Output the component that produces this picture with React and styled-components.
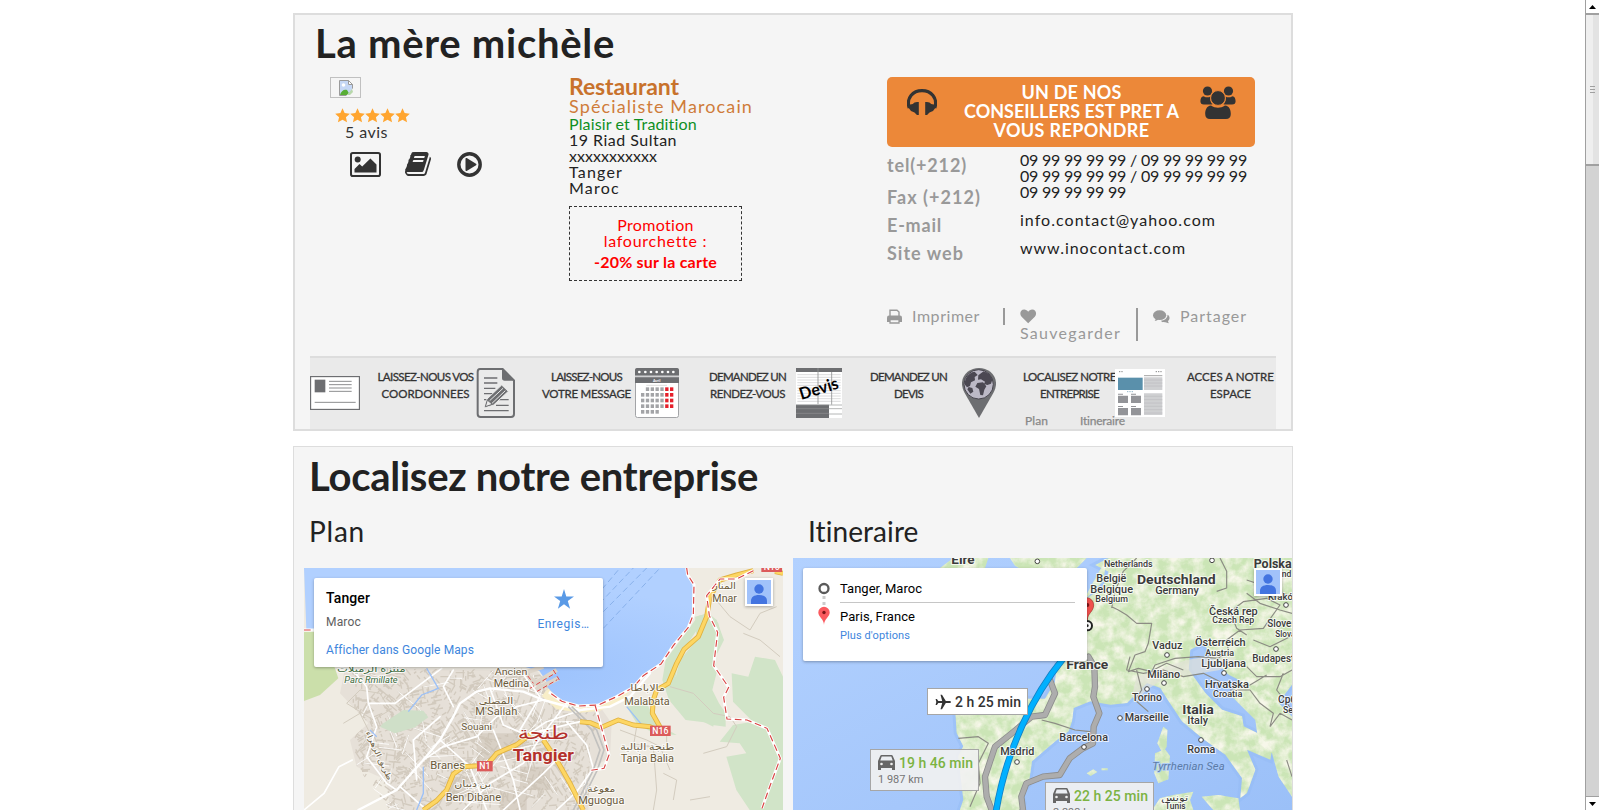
import React, { useLayoutEffect, useRef, useState } from 'react';
import styled, { createGlobalStyle, css } from 'styled-components';

const Global = createGlobalStyle`
  * { box-sizing: border-box; }
  html, body { margin: 0; height: 100%; overflow: hidden; background: #fff; }
  body { font-family: Lato, "Liberation Sans", sans-serif; font-size: 16px; line-height: 16px; color: #222; }
  h1, h2, h3, p, ul { margin: 0; padding: 0; }
  h3 { font-weight: 400; }
  svg { display: block; flex: none; }
`;

/* ---------- text tracked to a given measure ---------- */
const Tracked = styled.span`
  display: inline-block;
  white-space: pre;
`;
function Fit({ w, children }) {
  const ref = useRef(null);
  const [spacing, setSpacing] = useState(0);
  useLayoutEffect(() => {
    const natural = ref.current.getBoundingClientRect().width;
    setSpacing((w - natural) / children.length);
  }, [w, children]);
  return <Tracked ref={ref} style={{ letterSpacing: `${spacing}px` }}>{children}</Tracked>;
}

/* ---------- page frame ---------- */
const Window = styled.div`
  display: flex;
  height: 810px;
  overflow: hidden;
`;
const Page = styled.main`
  flex: 1;
  display: flex;
  flex-direction: column;
  gap: 15px;
  padding: 13px 0 0 293px;
`;
const Card = styled.section`
  width: 1000px;
  flex: none;
  background: #f5f5f5;
  border: ${p => p.$line}px solid #ddd;
  height: ${p => p.$h}px;
  display: flex;
  flex-direction: column;
`;
const Title = styled.h1`
  font-size: 40px;
  line-height: 44px;
  font-weight: 700;
  color: #222;
  padding: ${p => p.$pad};
`;

/* ---------- profile ---------- */
const Columns = styled.div`
  display: flex;
  height: 279px;
  padding-left: 35px;
`;
const Media = styled.div`
  width: 239px;
`;
const BrokenImage = styled.div`
  width: 31px;
  height: 21px;
  border: 1px solid #c0c0c0;
  padding: 2px 0 0 7px;
`;
const Stars = styled.div`
  display: flex;
  padding: 10px 0 0 5px;
`;
const Reviews = styled.div`
  padding: 1px 0 0 15px;
  color: #333;
`;
const MediaLinks = styled.div`
  display: flex;
  align-items: center;
  gap: 24px;
  padding: 10px 0 0 20px;
`;
const Details = styled.div`
  width: 318px;
  display: flex;
  flex-direction: column;
  align-items: flex-start;
  margin-top: -2px;
`;
const Category = styled.h2`
  font-size: 23px;
  line-height: 22px;
  font-weight: 700;
  color: #c8722c;
`;
const Speciality = styled.p`
  font-size: 18px;
  line-height: 19px;
  color: #cf7c3a;
`;
const Line = styled.p`
  color: ${p => p.$color || '#222'};
`;
const Promo = styled.div`
  width: 173px;
  height: 75px;
  margin-top: 10px;
  padding-top: 10px;
  border: 1px dashed #333;
  text-align: center;
  color: #f00;
  strong { display: block; line-height: 25px; }
`;
const Contact = styled.div`
  width: 368px;
`;
const Advisor = styled.div`
  display: flex;
  justify-content: space-between;
  height: 70px;
  padding: 6px 19px 0 20px;
  border-radius: 5px;
  background: #ec8839;
  color: #fff;
  font-weight: 700;
  font-size: 18px;
  line-height: 19px;
  text-align: center;
  div { margin-left: 6px; }
`;
const AdvisorIcon = styled.span`
  padding-top: ${p => p.$top}px;
`;
const Coordinates = styled.div`
  display: flex;
  height: 161px;
`;
const Labels = styled.div`
  width: 133px;
  font-size: 18px;
  font-weight: 700;
  color: #999;
  padding-top: 2px;
  p { line-height: 28px; }
  p:first-child { line-height: 32px; margin-bottom: 2px; }
`;
const Values = styled.div`
  padding-top: 5px;
  p + p { margin-top: 12px; }
`;
const Actions = styled.div`
  display: flex;
  color: #999;
  line-height: 16px;
`;
const Action = styled.div`
  width: 133px;
  flex: none;
  display: flex;
  flex-wrap: wrap;
  align-items: flex-start;
  align-content: flex-start;
  padding-left: ${p => (p.$rule ? 15 : 0)}px;
  ${p => p.$rule && css`border-left: 2px solid #999;`}
  height: ${p => p.$h}px;
  margin-left: ${p => p.$shift || 0}px;
  column-gap: 10px;
`;

/* ---------- service strip ---------- */
const Strip = styled.ul`
  display: flex;
  list-style: none;
  width: 966px;
  height: 73px;
  margin-left: 15px;
  padding-top: 10px;
  background: #eaeaea;
  border-top: 2px solid #ddd;
`;
const Service = styled.li`
  width: 161px;
  display: flex;
`;
const Picture = styled.div`
  width: 50px;
  height: 50px;
  display: flex;
  align-items: center;
  justify-content: center;
  flex: none;
  z-index: 1;
`;
const Caption = styled.div`
  width: 103px;
  margin-left: 14px;
  flex: none;
  text-align: center;
  font-size: 11.5px;
  line-height: 17px;
  -webkit-text-stroke: 0.3px #333;
  color: #333;
`;
const SubLinks = styled.div`
  display: flex;
  gap: 32px;
  padding: 10px 0 0 7px;
  font-size: 12px;
  color: #888;
  -webkit-text-stroke: 0.25px #888;
`;

/* ---------- maps ---------- */
const MapRow = styled.div`
  display: flex;
`;
const MapColumn = styled.div`
  width: ${p => p.$w}px;
  padding-left: ${p => p.$inset}px;
`;
const MapTitle = styled.h3`
  font-size: 28px;
  line-height: 34px;
  height: ${p => p.$h}px;
  padding: 1px 0 0 ${p => p.$inset}px;
`;
const MapFrame = styled.div`
  position: relative;
  width: ${p => p.$w}px;
  height: ${p => p.$h}px;
  overflow: hidden;
  font-family: Roboto, sans-serif;
`;
const InfoCard = styled.div`
  position: absolute;
  left: 10px;
  top: 10px;
  width: ${p => p.$w}px;
  height: ${p => p.$h}px;
  padding: 12px;
  display: flex;
  justify-content: space-between;
  background: #fff;
  border-radius: 2px;
  box-shadow: 0 1px 3px rgba(0, 0, 0, 0.3);
  font-size: 12px;
  color: #5e5e5e;
`;
const Place = styled.div`
  strong { display: block; font-size: 14px; font-weight: 500; color: #000; line-height: 16px; margin-bottom: 8px; }
`;
const BlueLink = styled.div`
  color: #4086dd;
  font-size: ${p => p.$size || 12}px;
  margin-top: ${p => p.$top || 0}px;
`;
const Save = styled.div`
  display: flex;
  flex-direction: column;
  align-items: center;
  width: 53px;
  margin: -1px 1px 0 0;
`;
const RouteMarks = styled.div`
  padding: 2px 0 0 3px;
`;
const Trip = styled.div`
  width: 235px;
  color: #000;
  font-size: 13px;
  padding-top: 1px;
`;
const Stop = styled.div`
  height: ${p => p.$h}px;
  ${p => p.$rule && css`border-bottom: 1px solid #c6c6c6; margin-bottom: 6px;`}
`;
const Avatar = styled.div`
  position: absolute;
  top: 10px;
  right: 10px;
  width: 28px;
  height: 28px;
  border: 2px solid #fff;
  background: #a1c2fa;
  box-shadow: 0 1px 3px rgba(0, 0, 0, 0.3);
`;
const Pill = styled.div`
  position: absolute;
  left: ${p => p.$x}px;
  top: ${p => p.$y}px;
  width: ${p => p.$w}px;
  height: ${p => p.$h}px;
  padding: 4px 7px;
  border: 1px solid #a6a6a6;
  background: ${p => (p.$muted ? 'rgba(241,241,241,.92)' : '#fff')};
  color: ${p => (p.$muted ? '#7cb342' : '#333')};
  font-size: 14px;
  font-weight: 500;
  small { display: block; font-size: 11px; font-weight: 400; color: #757575; line-height: 17px; }
`;
const Ride = styled.div`
  display: flex;
  gap: 4px;
  height: 17px;
  align-items: center;
`;

/* ---------- scrollbar ---------- */
const Scrollbar = styled.aside`
  width: 14px;
  display: flex;
  flex-direction: column;
  border-left: 1px solid #a0a0a0;
  background: #d3d3d3;
`;
const Arrow = styled.div`
  height: 13px;
  background: #fff;
  display: flex;
  align-items: center;
  justify-content: center;
  ${p => p.$down && css`height: 14px; border-top: 1px solid #a0a0a0;`}
`;
const Thumb = styled.div`
  height: 151px;
  margin-top: 1px;
  outline: 1px solid #a0a0a0;
  border-top: 1px solid #a0a0a0;
  border-bottom: 1px solid #a0a0a0;
  background: linear-gradient(90deg, #efefef 7px, #e3e3e3 7px);
  display: flex;
  flex-direction: column;
  align-items: center;
  justify-content: center;
  gap: 2px;
`;
const Grip = styled.i`
  width: 5px;
  height: 1px;
  background: #a0a0a0;
`;
const Spacer = styled.div`
  flex: 1;
`;

/* ---------- icons ---------- */
const StarIcon = ({ size, color }) => (
  <svg width={size} height={size} viewBox="0 0 24 24" fill={color}>
    <path d="M12 .5l3.400 7.600 8.300.9-6.200 5.600 1.800 8.300-7.300-4.300-7.300 4.300 1.800-8.300L.3 9l8.300-.9z" />
  </svg>
);
const SaveStarIcon = () => (
  <svg width="20" height="20" viewBox="0 0 20 20" fill="#5a9ae6">
    <path d="M10 0l2.300 7.400H20l-6.200 4.700 2.300 7.700L10 15.200l-6.100 4.600 2.300-7.700L0 7.400h7.700z" />
  </svg>
);
const BrokenIcon = () => (
  <svg width="16" height="16" viewBox="0 0 16 16">
    <path d="M1.500.5h9l4 4v11h-13z" fill="#fff" stroke="#9a9a9a" />
    <path d="M2 1h8v4h4v10H2z" fill="#c5d7f5" />
    <circle cx="5.500" cy="5" r="1.800" fill="#fff" />
    <path d="M2 15c1-4 4-6 7-5l3 5z" fill="#58ae35" />
    <path d="M10.500.5v4h4z" fill="#fff" stroke="#9a9a9a" />
    <path d="M15.500 7.500L8 16h7.500z" fill="#f5f5f5" />
    <path d="M14 9l-5 6h3l3-3z" fill="#8fc57a" opacity=".6" />
  </svg>
);
const ImageIcon = () => (
  <svg width="31" height="25" viewBox="0 0 31 25" fill="#333">
    <rect x="1" y="1" width="29" height="23" rx="1.800" fill="none" stroke="#333" strokeWidth="2" />
    <circle cx="7.700" cy="7.500" r="3" />
    <path d="M4.500 20.500v-3.600l5-5 2.700 2.600 8.200-8 6.100 6.100v7.900z" />
  </svg>
);
const BookIcon = () => (
  <svg width="28" height="28" viewBox="0 0 1792 1792" fill="#333">
    <path d="M1639 478q40 57 18 129l-275 906q-19 64-76.500 107.500t-122.500 43.500h-923q-77 0-148.500-53.500t-99.500-131.500q-24-67-2-127 0-4 3-27t4-37q1-8-3-21.500t-3-19.500q2-11 8-21t16.500-23.500 16.500-23.500q23-38 45-91.500t30-91.500q3-10 .5-30t-.5-28q3-11 17-28t17-23q21-36 42-92t25-90q1-9-2.500-32t.5-28q4-13 22-30.500t22-22.500q19-26 42.500-84.500t27.500-96.500q1-8-3-25.500t-2-26.500q2-8 9-18t18-23 17-21q8-12 16.500-30.500t15-35 16-36 19.500-32 26.500-23.500 36-11.500 47.500 5.500l-1 3q38-9 51-9h761q74 0 114 56t18 130l-274 906q-36 119-71.500 153.500t-128.500 34.500h-869q-27 0-38 15-11 16-1 43 24 70 144 70h923q29 0 56-15.500t35-41.500l300-987q7-22 5-57 38 15 59 43zm-1064 2q-4 13 2 22.500t20 9.500h608q13 0 25.500-9.500t16.500-22.500l21-64q4-13-2-22.500t-20-9.500h-608q-13 0-25.500 9.500t-16.500 22.500zm-83 256q-4 13 2 22.500t20 9.500h608q13 0 25.500-9.500t16.500-22.500l21-64q4-13-2-22.500t-20-9.500h-608q-13 0-25.500 9.500t-16.500 22.500z" />
  </svg>
);
const PlayIcon = () => (
  <svg width="25" height="25" viewBox="0 0 25 25">
    <circle cx="12.500" cy="12.500" r="10.700" fill="none" stroke="#333" strokeWidth="3.400" />
    <path d="M8.500 6.800c0-.8.600-1 1.200-.7l9.300 5.600c.6.400.6 1.200 0 1.600l-9.300 5.600c-.6.300-1.200 0-1.200-.7z" fill="#333" />
  </svg>
);
const HeadphonesIcon = () => (
  <svg width="30" height="26" viewBox="0 0 30 26" fill="#333">
    <path d="M2.200 19C-1 9 6 1.700 15 1.700S31 9 27.800 19" fill="none" stroke="#333" strokeWidth="3.200" />
    <path d="M.8 16l5-1 1.700-1.500 2.500-.5h1.800v13H10l-2.500-2.500L4 22l-3-4zM29.200 16l-5-1-1.700-1.500-2.500-.5h-1.800v13H20l2.500-2.500L26 22l3-4z" />
  </svg>
);
const UsersIcon = () => (
  <svg width="36" height="33" viewBox="0 0 36 33" fill="#333">
    <circle cx="7.500" cy="5" r="4.600" />
    <circle cx="28.500" cy="5" r="4.600" />
    <path d="M3.500 10.200c3 1.600 5 1.400 7 .3-.7 3 .1 6 2 8H4c-2.500 0-3.600-1.300-3.600-3.300 0-2.600 1-4.800 3.100-5zM32.500 10.200c-3 1.600-5 1.400-7 .3.700 3-.1 6-2 8H32c2.500 0 3.600-1.300 3.600-3.300 0-2.600-1-4.800-3.100-5z" />
    <path d="M11 19.500c4.500 3 9.500 3 14 0 4.500.5 5.800 4.500 5.800 8.500 0 3.300-1.800 5-4.800 5H10c-3 0-4.800-1.700-4.800-5 0-4 1.300-8 5.800-8.500z" />
    <circle cx="18" cy="12" r="7.400" stroke="#ec8839" />
  </svg>
);
const PrintIcon = () => (
  <svg width="15" height="16" viewBox="0 0 15 16">
    <path d="M3 8V2.300h7L12 4v4" fill="none" stroke="#999" strokeWidth="1.400" />
    <path d="M2 7.500h11q2 0 2 2V14H0V9.500q0-2 2-2z" fill="#999" />
    <path d="M3 11.500h9V15H3z" fill="#f5f5f5" stroke="#999" strokeWidth="1.300" />
  </svg>
);
const HeartIcon = () => (
  <svg width="17" height="17" viewBox="0 0 17 17" fill="#999">
    <path d="M8.200 15.300L1.600 8.800C-.8 6 .2 1.500 4.200 1.500c1.800 0 3 1 4 2.200 1-1.200 2.200-2.200 4-2.200 4 0 5 4.500 2.600 7.300z" />
  </svg>
);
const CommentsIcon = () => (
  <svg width="17" height="16" viewBox="0 0 17 16" fill="#999">
    <path d="M9 14c3 .6 4 0 5 .8 1 .5 1.500.5 2 .3-1-.8-1-1.500-.9-2.200C17.200 11 17 8 14.500 6.800c0 4-3.500 5.700-6.500 6z" />
    <ellipse cx="6.600" cy="7.200" rx="6.600" ry="4.900" />
    <path d="M2.500 10c.4 1.500-.3 2.300-.9 2.800 1.500 0 2.800-.5 3.700-1.400z" />
  </svg>
);

const CardPicture = () => (
  <svg width="50" height="34" viewBox="0 0 150 102">
    <rect x="1.500" y="1.500" width="147" height="99" fill="#fff" stroke="#6d6e71" strokeWidth="4" />
    <path d="M14 11h32v38H14z" fill="#6d6e71" />
    <path d="M57 16h68M57 26h68M57 36h68M57 46h68M14 79h123" stroke="#8c8d8f" strokeWidth="3" />
  </svg>
);
const NotePicture = () => (
  <svg width="40" height="50" viewBox="0 0 120 150">
    <path d="M12 3h68l34 34v101q0 9-9 9H14q-9 0-9-9V12q0-9 7-9z" fill="#eaeaea" stroke="#6d6e71" strokeWidth="6" />
    <path d="M78 2l38 36H86q-8 0-8-8z" fill="#6d6e71" />
    <path d="M24 30h40M24 45h40M24 61h34M24 77h26M24 95h20M64 95h34M60 112h38M24 128h74" stroke="#6d6e71" strokeWidth="4" />
    <path d="M25 119l8-26 44-42 20 19-44 41z" fill="#6d6e71" stroke="#eaeaea" strokeWidth="3" />
    <path d="M41 98l40-37M48 106l40-38" stroke="#eaeaea" strokeWidth="3" />
    <path d="M28 116l6-20 15 13z" fill="#eaeaea" stroke="#6d6e71" strokeWidth="3" />
  </svg>
);
const CalendarPicture = () => {
  const cells = [];
  for (let r = 0; r < 5; r += 1) {
    for (let c = 0; c < 7; c += 1) {
      if ((r === 0 && c === 0) || (r === 4 && c > 3)) continue;
      cells.push(<rect key={`${r}-${c}`} x={18 + c * 14.500} y={58 + r * 17} width="10" height="11" fill={c > 4 ? '#e5202b' : '#a3a4a7'} />);
    }
  }
  return (
    <svg width="44" height="50" viewBox="0 0 132 150">
      <rect x="1.500" y="1.500" width="129" height="147" rx="6" fill="#fff" stroke="#a3a4a7" strokeWidth="3" />
      <path d="M6 0h120q6 0 6 6v39H0V6q0-6 6-6z" fill="#6d6e71" />
      <path d="M0 25h132" stroke="#d0d0d2" strokeWidth="5" />
      {[13, 31, 48, 65, 82, 99, 115].map(x => <circle key={x} cx={x} cy="12" r="4" fill="#fff" />)}
      <text x="65" y="41" fontSize="11" fontWeight="700" textAnchor="middle" fill="#fff">Avril</text>
      <path d="M34 52h62" stroke="#ccc" strokeWidth="2" />
      {cells}
    </svg>
  );
};
const QuotePicture = () => (
  <svg width="48" height="50" viewBox="-6 0 144 150">
    <path d="M0 0h138v150H0z" fill="#fff" />
    <path d="M0 0h138v12H0zM0 110h99v40H0z" fill="#6d6e71" />
    {[20, 28, 36, 44, 52, 60, 68, 76, 84, 92, 100].map(y => <path key={y} d={`M4 ${y}h130`} stroke="#c8c8ca" strokeWidth="2" />)}
    <path d="M66 0v108M107 12v98" stroke="#8f9092" strokeWidth="2.500" />
    <path d="M0 111h138M99 122h39M99 138h39M0 122h99M0 136h99" stroke="#909193" strokeWidth="2" />
    <text x="69" y="79" fontFamily="Lato" fontWeight="700" fontSize="50" textAnchor="middle" textLength="120" lengthAdjust="spacingAndGlyphs" transform="rotate(-17 69 64)" fill="#000">Devis</text>
  </svg>
);
const PinPicture = () => (
  <svg width="34" height="50" viewBox="0 0 102 150">
    <path d="M51 150L8 75C-16 30 18 0 51 0s67 30 43 75z" fill="#6d6e71" />
    <circle cx="50" cy="49" r="44" fill="#bcb9c6" stroke="#47454d" strokeWidth="3" />
    <path d="M11 32q11-20 27-21l9 10-9 6 1 10-12 6-3 11-9 4-8-10zM49 22l16-12q22 7 26 25l-4 12-11 4-10-3 3-7-12-7-9 1zM46 45l17-2 10 12-6 10-4 17-8-1-4-18-11-7zM20 57l11 3 3 11-9 6-9-13z" fill="#4b4852" />
  </svg>
);
const SitePicture = () => (
  <svg width="50" height="48" viewBox="0 0 150 144">
    <path d="M0 0h150v144H0z" fill="#fff" />
    <path d="M9 26h74v37H9z" fill="#5a90ab" />
    <path d="M87 25h55v38H87zM87 73h55v65H87z" fill="#cfd0d2" />
    <path d="M87 33h55M87 42h55M87 51h55M87 82h55M87 92h55M87 102h55M87 112h55M87 122h55M87 132h55" stroke="#bcbdc0" strokeWidth="2" />
    <path d="M87 20h55" stroke="#777" strokeWidth="2" />
    <path d="M12 8h12M122 8h20" stroke="#888" strokeWidth="3" strokeDasharray="4 3" />
    <path d="M36 68h18" stroke="#5a90ab" strokeWidth="2" strokeDasharray="4 3" />
    {[[9, 80], [48, 80], [9, 117], [48, 117]].map(([x, y]) => (
      <g key={`${x}${y}`} fill="#939498"><path d={`M${x} ${y}h30v22h-30zM${x} ${y - 6}h15v3h-15z`} /></g>
    ))}
  </svg>
);
const PersonIcon = () => (
  <svg width="24" height="24" viewBox="0 0 24 24" fill="#4374e0">
    <circle cx="12" cy="9" r="4.700" />
    <path d="M4 24v-3c0-4 3-6 8-6s8 2 8 6v3z" />
  </svg>
);
const RouteIcon = () => (
  <svg width="12" height="46" viewBox="0 0 12 46">
    <circle cx="6" cy="6.500" r="4.500" fill="none" stroke="#5a5a5a" strokeWidth="2.300" />
    <path d="M4.500 14h3v3h-3zM4.500 20h3v3h-3z" fill="#ccc" />
    <path d="M6 43C6 37 .3 35 .3 30.500a5.700 5.700 0 0111.400 0C11.700 35 6 37 6 43z" fill="#fb5a5f" />
    <circle cx="6" cy="30.500" r="1.700" fill="#7d1518" />
  </svg>
);
const PlaneIcon = () => (
  <svg width="16" height="16" viewBox="0 0 16 16" fill="#333">
    <path d="M16 8c0-.7-.7-1.100-1.700-1.100h-3.500L7 .7H5.500l1.700 6.200H3.300L1.900 5H.6L1.300 8 .6 11h1.300l1.400-1.900h3.900l-1.700 6.200H7l3.800-6.200h3.500c1 0 1.700-.4 1.700-1.100z" />
  </svg>
);
const CarIcon = () => (
  <svg width="17" height="15" viewBox="0 0 17 15">
    <path d="M3.500 0h10q1 0 1.300 1L17 6v9h-3v-2H3v2H0V6l2.200-5q.4-1 1.300-1zM3.700 1.500L2.300 5.500h12.400l-1.400-4z" fill="#666" />
    <circle cx="3.500" cy="9" r="1.300" fill="#eee" />
    <circle cx="13.500" cy="9" r="1.300" fill="#eee" />
  </svg>
);

/* ---------- map drawings ---------- */
const Label = ({ x, y, w, size = 30, fill = '#6b5b3c', weight = 400, halo = '#fff', italic, children, rotate }) => (
  <text
    x={x} y={y} fontSize={size} fill={fill} fontWeight={weight} textAnchor="middle"
    fontFamily='Roboto, "DejaVu Sans", sans-serif' fontStyle={italic ? 'italic' : 'normal'}
    stroke={halo} strokeWidth="6" strokeOpacity=".75" strokeLinejoin="round" paintOrder="stroke"
    textLength={w} lengthAdjust="spacingAndGlyphs"
    transform={rotate ? `rotate(${rotate} ${x} ${y})` : undefined}
  >
    {children}
  </text>
);

function streetGrid() {
  let seed = 11;
  const rnd = () => {
    seed = (seed * 16807) % 2147483647;
    return seed / 2147483647;
  };
  const blocks = [];
  const streets = [];
  for (let i = 0; i < 1500; i += 1) {
    const x = 190 + rnd() * 720;
    const y = 685 + rnd() * 430;
    const a = (Math.floor(x / 110) * 0.7 + Math.floor(y / 90) * 0.5 + (rnd() > 0.5 ? 1.57 : 0));
    const l = 8 + rnd() * 22;
    blocks.push(`M${x.toFixed(0)} ${y.toFixed(0)}l${(Math.cos(a) * l).toFixed(0)} ${(Math.sin(a) * l).toFixed(0)}`);
    if (i % 17 === 0) {
      const k = 40 + rnd() * 60;
      streets.push(`M${x.toFixed(0)} ${y.toFixed(0)}l${(Math.cos(a) * k).toFixed(0)} ${(Math.sin(a) * k).toFixed(0)}`);
    }
  }
  return { blocks: blocks.join(''), streets: streets.join('') };
}
const grid = streetGrid();

const CityMap = () => (
  <svg width="479" height="242" viewBox="42 384 1437 726">
    <defs>
      <radialGradient id="bay" cx=".62" cy=".75" r=".6">
        <stop offset="0" stopColor="#9dc3fd" />
        <stop offset="1" stopColor="#b1d0ff" />
      </radialGradient>
      <clipPath id="town">
        <path d="M165 685L740 690 800 770 930 800 965 850 900 900 895 1110H300L200 980 180 900 235 850 150 760z" />
      </clipPath>
    </defs>
    <path d="M42 384h1437v726H42z" fill="#efebe2" />
    <path d="M42 575h55l48 140-55 50-48 18z" fill="#cbdfaa" />
    <path d="M165 685L740 690 800 770 930 800 965 850 960 950 900 990 895 1110H300L290 1020 200 980 180 900 235 850 150 760z" fill="#e6e0d8" />
    <g fill="#d1e4c8">
      <path d="M1225 528l30 -8 25 20 22 60-20 40-50 15-30 40 15 60 30 60 20 40 40 5 0 -40 -20-30-20-40 15-60-30-90-5-50 -20 10-60 90-10 60 40 60 20 60 50 20-80-10-50-60 -20-60 10-60z" />
      <path d="M1215 530l40-10 30 30 10 50-30 60-30 40 30 50 10 60-5 50-60-30-60-90 20-80 50-60z" />
      <path d="M1325 700l50 10 20-60 60 10 24 50v400h-100l-40-60-30-100 60-10-20-30-60-5 40-50 60-10-60-60z" />
      <path d="M1010 800l60-10 30 60 60 35-70-5-50-30z" />
    </g>
    <g clipPath="url(#town)">
      <path d={grid.blocks} fill="none" stroke="#d2cabe" strokeWidth="4" />
      <path d="M560 880h130v80H560zM690 980h90v70h-90zM470 1010h80v60h-80zM630 1050h80v60h-80z" fill="#c9c0b2" opacity=".5" />
      <path d={grid.streets} fill="none" stroke="#fff" strokeWidth="2.500" />
      <path d="M280 850l60-40 60 2 15 20-40 30-60 18-45-20z" fill="#cfdfc8" />
    </g>
    <path d="M42 384H1190l3 20 19 30-2 90-15 38-45 55-37 55-53 35-30 35-50 28-55 25-60 3-50-14-38-28-8-32 -20-30-50-15-40-5-610-105z" fill="url(#bay)" />
    <path d="M775 745l40 42 55 12 50-3 60-26 50-28-35 40-65 30-60 6-70-10-45-40z" fill="#f8eec8" />
    <path d="M690 690l70 55M720 740l80-50M700 700l60-20M735 750l70-35" stroke="#ddd5ca" strokeWidth="13" />
    <path d="M720 745l75-45M700 690l30 40M740 755l62-36M790 690l18 30" stroke="#df4444" strokeWidth="3" strokeDasharray="14 8" />
    <path d="M900 490l90-106M910 510l120-126M940 515l130-131M940 565l170-181" stroke="#7fa9e6" strokeWidth="2.500" strokeDasharray="18 10" />
    <g fill="none" stroke="#d3ccbf" strokeWidth="3">
      <path d="M1140 740l70 20 60 60 50 10 20 30-30 60-70 20M990 870l80 30 40 20 30 70M1020 910l70 10 10 130-10 60M1270 470l50 60 60 40 30-50 50-20M1360 580l50 20 60 50M170 790l40-40 60 10 30 50-50 30zM160 850l50-30 30 60-40 60" />
      <path d="M1040 860h90v60h-100zM1120 1000l40 20-10 60M1200 1080l60-10" />
    </g>
    <g fill="none" stroke="#fff" strokeWidth="7" strokeLinecap="round" strokeLinejoin="round">
      <path d="M205 1110l115-60 80-90 50-60 40-70 20-40 50-35 40-10 100 10 60 25 110 30 90-10 60-30 60-70" />
      <path strokeWidth="5" d="M180 680l50 60 5 50 80 0 60-45 80-60M235 790l25 70-30 90 60 80 30 20M42 1110l60-50 45-80 40-20M400 960l60-40 100-30 60-60 60-30 80-20M490 800l-30-60 30-50M450 900l90 80 50 130M600 745l40 110 70 30 60-40 120-40M610 870l60 150 20 90M520 1110l80-80 100-60 60-90M330 1040l80 70M690 690l60 80-60 100M640 1110l120-110 40-40M760 880l70-90" />
      <path d="M830 845l60 70 20 70-50 70-60 55M720 880l150-35M380 1020l-10-120 80-70" strokeWidth="5" />
    </g>
    <path d="M835 800l70 70 25 60-20 60-60 120M845 800l75 70 22 60-20 60-60 120" fill="none" stroke="#c2c1bf" strokeWidth="5" />
    <path d="M410 685l35 60-50 20-40 50M400 980l0 80-20 50M240 870l20 20M1010 800l50 60" fill="none" stroke="#9cc0f7" strokeWidth="4" />
    <g fill="none" strokeLinejoin="round">
      {[['#e0b13f', 15], ['#fdd663', 10]].map(([c, w]) => (
        <path key={c} stroke={c} strokeWidth={w} d="M400 1110l40-28 30-32 20-48 30-22 70-4 30-36 60-26 40-30M760 900l40 60 40 70 40 80M870 845l30 3 35 14 50-22 45 15 50 5 30 15M1115 870l-28-50 3-40 10-30 35-20 25-60 22-42 43-38 25-60 10-60 30-50 50-15 50-13M1455 395l24 5" />
      ))}
    </g>
    {[['#fff', 9, 'none'], ['#d94545', 3.500, '20 11']].map(([c, w, dash]) => (
      <path key={c} stroke={c} strokeWidth={w} strokeDasharray={dash} fill="none" d="M42 570h60M1190 384l3 20 19 30-2 90-15 38-45 55-37 55-53 35-30 35-50 28-55 25-60 3-50-14-38-28M915 795l20 70 22 80-15 40-40 6M1390 392l-50 25-50 0-40 50 8 60 25 50-12 100 45 65-15 30 10 65 60 3 60 25 40 90-30 80-25 70" />
    ))}
    <Label x={244} y={697} w={206} size={28} fill="#3c6b3d">منتزه الرميلات</Label>
    <Label x={243} y={728} w={160} size={25} fill="#3c6b3d" italic>Parc Rmillate</Label>
    <Label x={663} y={706} w={98} size={29}>Ancien</Label>
    <Label x={664} y={741} w={106} size={30}>Medina</Label>
    <Label x={618} y={791} w={104} size={28}>المصلى</Label>
    <Label x={619} y={826} w={126} size={32}>M'Sallah</Label>
    <Label x={560} y={870} w={92} size={28}>Souani</Label>
    <Label x={473} y={986} w={104} size={32}>Branes</Label>
    <Label x={548} y={1042} w={110} size={28}>بن ديبان</Label>
    <Label x={550} y={1082} w={166} size={32}>Ben Dibane</Label>
    <Label x={760} y={896} w={154} size={54} fill="#b3312c">طنجة</Label>
    <Label x={760} y={963} w={184} size={48} fill="#b3312c" weight={700}>Tangier</Label>
    <Label x={1073} y={753} w={104} size={28}>مالاباطا</Label>
    <Label x={1071} y={794} w={136} size={32}>Malabata</Label>
    <Label x={1303} y={448} w={70} size={28}>المنار</Label>
    <Label x={1304} y={487} w={74} size={32}>Mnar</Label>
    <Label x={1072} y={931} w={162} size={28}>طنجة البالية</Label>
    <Label x={1072} y={967} w={160} size={32}>Tanja Balia</Label>
    <Label x={934} y={1057} w={84} size={28}>مغوغة</Label>
    <Label x={934} y={1092} w={138} size={32}>Mguogua</Label>
    <Label x={260} y={950} w={160} size={22} rotate={65}>طريق الزهراء</Label>
    {[['N1', 561, 963, 47], ['N16', 1080, 857, 62], ['N16', 1414, 365, 62]].map(([t, x, y, w]) => (
      <g key={`${t}${x}`}>
        <rect x={x} y={y} width={w} height="31" fill="#dc5b5b" />
        <text x={x + w / 2} y={y + 25} fontSize="26" fontFamily="Roboto" fontWeight="500" fill="#fff" textAnchor="middle">{t}</text>
      </g>
    ))}
  </svg>
);

const land = [
  'M480 384l40-30h105l-10 30zM690 354h230l-30 30-165 5-20-12z',
  'M921 475l45-30 20-50-40-20 40-21h550v380l-60 80 30 10-60-30-40-60-60-30-50-50-25-45-40 20-5 60 50 70 50 50 60 20 5 30 40 20 45 50-5 30-70-30 25 60-25 70-20 15 5-60-50-70-70-50-60-50-40-60-25-40-40-15-60 60-50 5-60-10-50 20-5 40-10 30-40 30-70 60-10 70-25 25 10 30 -25 50H530l20-60-15-130 15-30-20-40-5-80 30-15 90-8 150 0 30-50 10-80-15-50-25-20h100z',
  'M1410 700l126 130v240l-40-60-20-70-40-30-10-70-80-80z',
  'M1150 860l12 10-2 50-12 20-16-30zM1125 940l30-12 15 20-5 70-30 12-12-30zM1265 1070l50-5 60 10 5 35h-80zM1120 1105l20-30 40-10 60-10-10 25 10 30h-120zM920 1000l20-12 12 8-20 12zM965 985h18v6h-18zM980 354l-50 90-20 40 60-60z',
];
const borders = 'M995 500l20 10 25 15 30 25 45 0-10 60-10 25-30 10-20 50 30-10 40 10 10-20 60-20 70-5 60 5 30-25-5-30 40-30 70-5 50-70-40-20-70 10-40 30 20 50 30 20M1070 354l-40 40-25 60-10 50M1320 354l20 40 0 50-30 10M1050 650l-10 40 50 10 60-10 60 20 60-10 40 20 40 20 60-5 50-30M1070 690l15 60-20 30 40 35M785 840l40 10 60 20 45 5M535 895l60 -5 30 20-30 60 5 60-30 70M1400 460l40 30 60 20 36 10M1420 600l50 20 60-30M1400 680l30 30 70 0 36 -20M1350 750l60 0 30 40 40 30 -10 40M1510 700l-20 50 46 60M1470 860l30-40 36 20M1520 960l16 50M1400 420l60 20 76 30M1120 690l40-20 50 20';

const EuropeMap = () => (
  <svg width="499" height="252" viewBox="39 354 1497 756">
    <defs>
      <linearGradient id="ocean" x1="0" y1="0" x2="1" y2="1">
        <stop offset="0" stopColor="#b2d1ff" />
        <stop offset=".6" stopColor="#a5c7fb" />
        <stop offset="1" stopColor="#9bc0f8" />
      </linearGradient>
      <filter id="terrain" x="0" y="0" width="100%" height="100%">
        <feTurbulence type="fractalNoise" baseFrequency=".03" numOctaves="4" seed="8" />
        <feColorMatrix values="0 0 0 0 .93 0 0 0 0 .93 0 0 0 0 .82 2.200 0 0 0 -.75" />
        <feComposite in2="SourceGraphic" operator="in" />
      </filter>
    </defs>
    <path d="M39 354h1497v756H39z" fill="url(#ocean)" />
    <path d={land[1]} fill="none" stroke="#93bbf5" strokeWidth="18" opacity=".45" />
    {land.map(d => <path key={d} d={d} fill="#cbe5b6" />)}
    {land.map(d => <path key={`t${d}`} d={d} filter="url(#terrain)" />)}
    <path d="M1055 770l15-60 60-20 90-30 90-15 60 10-50 35-90 15-70 5-60 40-30 30z" fill="#e3e2d8" opacity=".7" />
    <path d={borders} fill="none" stroke="#8c8c84" strokeWidth="3.500" strokeLinejoin="round" />
    <g fill="none" strokeLinejoin="round" strokeLinecap="round">
      {[['#8d8d8d', 19], ['#adadad', 14]].map(([c, w]) => (
        <path key={c} stroke={c} strokeWidth={w} d="M925 650l18 30 2 60-5 30 18 50-17 40-2 50-30 15-40 30-30 50-50 5-50 20-15 40 5 40-25 30M810 720l15 40-30 65-40 5-60 50-50 40-20 60-10 30 5 60 15 40" />
      ))}
      <path d="M850 655c-90 110-170 270-202 460" stroke="#1480c4" strokeWidth="20" />
      <path d="M850 655c-90 110-170 270-202 460" stroke="#00b0ff" strokeWidth="15" />
    </g>
    <path d="M922 540c0-20-25-30-25-45a22 22 0 0144 0c0 20-19 25-19 45z" fill="#f0504e" stroke="#a32d2b" strokeWidth="2" />
    <circle cx="922" cy="495" r="6" fill="#7d1518" />
    <circle cx="922" cy="557" r="14" fill="#fff" stroke="#222" strokeWidth="6" />
    <circle cx="922" cy="557" r="4" fill="#222" />
    {[[772, 364], [1296, 361], [1518, 495], [1161, 645], [1488, 627], [1152, 729], [1101, 747], [1332, 699], [1020, 834], [912, 921], [711, 966], [1263, 900]].map(([x, y]) => (
      <circle key={`${x}${y}`} cx={x} cy={y} r="7" fill="#fff" stroke="#444" strokeWidth="3" />
    ))}
    {[
      ['Eire', 549, 372, 70, 36, 700], ['Netherlands', 1045, 381, 146, 27, 500], ['België', 994, 427, 90, 30, 500],
      ['Belgique', 995, 458, 128, 31, 500], ['Belgium', 995, 486, 98, 26, 500], ['Deutschland', 1189, 431, 236, 40, 700],
      ['Germany', 1191, 463, 131, 30, 500], ['Polska', 1478, 384, 114, 38, 700], ['Poland', 1494, 412, 80, 28, 500], ['Kraków', 1512, 480, 96, 28, 500],
      ['Česká rep', 1360, 525, 146, 33, 500], ['Czech Rep', 1360, 549, 126, 26, 500], ['Slovensko', 1530, 560, 136, 32, 500], ['Slovakia', 1532, 590, 92, 27, 500],
      ['Österreich', 1321, 619, 152, 33, 500], ['Austria', 1319, 647, 86, 27, 500], ['Vaduz', 1162, 628, 90, 31, 500],
      ['Budapest', 1480, 665, 126, 31, 500], ['Ljubljana', 1331, 682, 134, 31, 500], ['France', 922, 686, 126, 38, 700],
      ['Milano', 1151, 713, 98, 31, 500], ['Hrvatska', 1341, 744, 132, 33, 500], ['Croatia', 1343, 771, 88, 27, 500],
      ['Torino', 1101, 784, 90, 31, 500], ['Србија', 1542, 790, 96, 32, 500], ['Serbia', 1546, 818, 74, 27, 500],
      ['Italia', 1254, 821, 94, 40, 700], ['Italy', 1253, 851, 62, 31, 500], ['Marseille', 1100, 844, 132, 31, 500],
      ['Barcelona', 911, 904, 146, 31, 500], ['Roma', 1264, 938, 84, 31, 500], ['Madrid', 712, 946, 102, 31, 500],
      ['تونس', 1184, 1082, 82, 30, 500], ['Tunis', 1186, 1107, 62, 27, 500],
    ].map(([t, x, y, w, s, b]) => <Label key={t} x={x} y={y} w={w} size={s} weight={b} fill="#3b3b3b">{t}</Label>)}
    <Label x={1225} y={991} w={218} size={31} fill="#5c7ba8" halo="#a5c7fb" italic>Tyrrhenian Sea</Label>
  </svg>
);

const services = [
  { art: CardPicture, lines: [['LAISSEZ-NOUS VOS', 96], ['COORDONNEES', 88]] },
  { art: NotePicture, lines: [['LAISSEZ-NOUS', 71], ['VOTRE MESSAGE', 89]] },
  { art: CalendarPicture, lines: [['DEMANDEZ UN', 77], ['RENDEZ-VOUS', 75]] },
  { art: QuotePicture, lines: [['DEMANDEZ UN', 77], ['DEVIS', 29]] },
  { art: PinPicture, lines: [['LOCALISEZ NOTRE', 93], ['ENTREPRISE', 59]], links: true },
  { art: SitePicture, lines: [['ACCES A NOTRE', 87], ['ESPACE', 41]] },
];

export default function App() {
  return (
    <Window>
      <Global />
      <Page>
        <Card $line={2} $h={418}>
          <Title $pad="6px 0 12px 20px"><Fit w={300}>La mère michèle</Fit></Title>
          <Columns>
            <Media>
              <BrokenImage><BrokenIcon /></BrokenImage>
              <Stars>{[1, 2, 3, 4, 5].map(n => <StarIcon key={n} size={15} color="#ffa530" />)}</Stars>
              <Reviews><Fit w={43}>5 avis</Fit></Reviews>
              <MediaLinks><ImageIcon /><BookIcon /><PlayIcon /></MediaLinks>
            </Media>
            <Details>
              <Category><Fit w={110}>Restaurant</Fit></Category>
              <Speciality><Fit w={184}>Spécialiste Marocain</Fit></Speciality>
              <Line $color="#0f8f1f"><Fit w={128}>Plaisir et Tradition</Fit></Line>
              <Line><Fit w={108}>19 Riad Sultan</Fit></Line>
              <Line><Fit w={88}>xxxxxxxxxxx</Fit></Line>
              <Line><Fit w={54}>Tanger</Fit></Line>
              <Line><Fit w={51}>Maroc</Fit></Line>
              <Promo>
                <p><Fit w={77}>Promotion</Fit></p>
                <p><Fit w={103}>lafourchette :</Fit></p>
                <strong><Fit w={123}>-20% sur la carte</Fit></strong>
              </Promo>
            </Details>
            <Contact>
              <Advisor>
                <AdvisorIcon $top={6}><HeadphonesIcon /></AdvisorIcon>
                <div>
                  <p><Fit w={100}>UN DE NOS</Fit></p>
                  <p><Fit w={215}>CONSEILLERS EST PRET A</Fit></p>
                  <p><Fit w={156}>VOUS REPONDRE</Fit></p>
                </div>
                <AdvisorIcon $top={3}><UsersIcon /></AdvisorIcon>
              </Advisor>
              <Coordinates>
                <Labels>
                  <p><Fit w={80}>tel(+212)</Fit></p>
                  <p><Fit w={94}>Fax (+212)</Fit></p>
                  <p><Fit w={55}>E-mail</Fit></p>
                  <p><Fit w={77}>Site web</Fit></p>
                </Labels>
                <Values>
                  <div><Fit w={227}>09 99 99 99 99 / 09 99 99 99 99</Fit></div>
                  <div><Fit w={227}>09 99 99 99 99 / 09 99 99 99 99</Fit></div>
                  <p><Fit w={106}>09 99 99 99 99</Fit></p>
                  <p><Fit w={196}>info.contact@yahoo.com</Fit></p>
                  <p><Fit w={166}>www.inocontact.com</Fit></p>
                </Values>
              </Coordinates>
              <Actions>
                <Action $h={17}><PrintIcon /><Fit w={68}>Imprimer</Fit></Action>
                <Action $h={17} $rule $shift={-17}><HeartIcon /><Fit w={101}>Sauvegarder</Fit></Action>
                <Action $h={33} $rule><CommentsIcon /><Fit w={67}>Partager</Fit></Action>
              </Actions>
            </Contact>
          </Columns>
          <Strip>
            {services.map(({ art: Art, lines, links }) => (
              <Service key={lines[0][0] + lines[1][0]}>
                <Picture><Art /></Picture>
                <Caption>
                  {lines.map(([t, w]) => <div key={t}><Fit w={w}>{t}</Fit></div>)}
                  {links && <SubLinks><Fit w={23}>Plan</Fit><Fit w={45}>Itineraire</Fit></SubLinks>}
                </Caption>
              </Service>
            ))}
          </Strip>
        </Card>
        <Card $line={1} $h={420}>
          <Title $pad="7px 0 15px 15px"><Fit w={449}>Localisez notre entreprise</Fit></Title>
          <MapRow>
            <MapColumn $w={499} $inset={10}>
              <MapTitle $h={55} $inset={5}><Fit w={56}>Plan</Fit></MapTitle>
              <MapFrame $w={479} $h={242}>
                <CityMap />
                <InfoCard $w={289} $h={89}>
                  <Place>
                    <strong><Fit w={44}>Tanger</Fit></strong>
                    <Fit w={35}>Maroc</Fit>
                    <BlueLink $top={12}><Fit w={147}>Afficher dans Google Maps</Fit></BlueLink>
                  </Place>
                  <Save>
                    <SaveStarIcon />
                    <BlueLink $top={7}><Fit w={52}>Enregis…</Fit></BlueLink>
                  </Save>
                </InfoCard>
                <Avatar><PersonIcon /></Avatar>
              </MapFrame>
            </MapColumn>
            <MapColumn $w={499} $inset={0}>
              <MapTitle $h={45} $inset={15}><Fit w={111}>Itineraire</Fit></MapTitle>
              <MapFrame $w={499} $h={252}>
                <EuropeMap />
                <Pill $x={134} $y={130} $w={101} $h={27}>
                  <Ride><PlaneIcon /><Fit w={66}>2 h 25 min</Fit></Ride>
                </Pill>
                <Pill $x={77} $y={191} $w={109} $h={42} $muted>
                  <Ride><CarIcon /><Fit w={74}>19 h 46 min</Fit></Ride>
                  <small>1 987 km</small>
                </Pill>
                <Pill $x={252} $y={224} $w={109} $h={42} $muted>
                  <Ride><CarIcon /><Fit w={74}>22 h 25 min</Fit></Ride>
                  <small>2 293 km</small>
                </Pill>
                <InfoCard $w={284} $h={93}>
                  <RouteMarks><RouteIcon /></RouteMarks>
                  <Trip>
                    <Stop $h={22} $rule><Fit w={82}>Tanger, Maroc</Fit></Stop>
                    <Stop $h={18}><Fit w={75}>Paris, France</Fit></Stop>
                    <BlueLink $size={11} $top={1}><Fit w={70}>Plus d'options</Fit></BlueLink>
                  </Trip>
                </InfoCard>
                <Avatar><PersonIcon /></Avatar>
              </MapFrame>
            </MapColumn>
          </MapRow>
        </Card>
      </Page>
      <Scrollbar>
        <Arrow><svg width="7" height="4" viewBox="0 0 7 4"><path d="M0 4l3.500-4L7 4z" /></svg></Arrow>
        <Thumb><Grip /><Grip /><Grip /></Thumb>
        <Spacer />
        <Arrow $down><svg width="7" height="4" viewBox="0 0 7 4"><path d="M0 0l3.500 4L7 0z" /></svg></Arrow>
      </Scrollbar>
    </Window>
  );
}
